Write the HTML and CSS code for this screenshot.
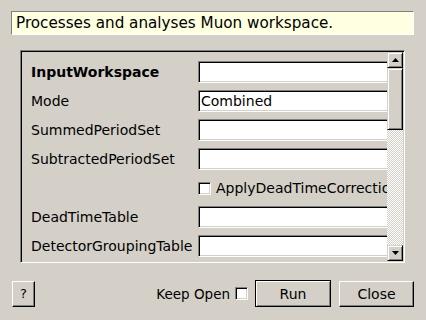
FILE: index.html
```html
<!DOCTYPE html>
<html>
<head>
<meta charset="utf-8">
<link rel="stylesheet" href="styles.css">
</head>
<body>
<div class="desc">Processes and analyses Muon workspace.</div>
<div class="frame">
  <div class="viewport">
    <div class="rows">
      <div class="label bold">InputWorkspace</div><div class="field"><div class="input"></div></div>
      <div class="label">Mode</div><div class="field"><div class="input">Combined</div></div>
      <div class="label">SummedPeriodSet</div><div class="field"><div class="input"></div></div>
      <div class="label">SubtractedPeriodSet</div><div class="field"><div class="input"></div></div>
      <div class="label"></div><div class="field check"><span class="cb"></span><span class="cbtext">ApplyDeadTimeCorrection</span></div>
      <div class="label">DeadTimeTable</div><div class="field"><div class="input"></div></div>
      <div class="label">DetectorGroupingTable</div><div class="field"><div class="input"></div></div>
    </div>
  </div>
  <div class="scrollbar">
    <div class="sbtn"><svg width="7" height="4" viewBox="0 0 7 4"><path d="M3.5 0 L7 4 L0 4 Z" fill="#000"/></svg></div>
    <div class="thumb"></div>
    <div class="trough"></div>
    <div class="sbtn"><svg width="7" height="4" viewBox="0 0 7 4"><path d="M0 0 L7 0 L3.5 4 Z" fill="#000"/></svg></div>
  </div>
</div>
<div class="bottom">
  <div class="btn help">?</div>
  <div class="spacer"></div>
  <span class="keep">Keep Open</span><span class="cb keepcb"></span>
  <div class="btn run">Run</div>
  <div class="btn close">Close</div>
</div>
</body>
</html>
```
FILE: styles.css
```css
html, body {
  margin: 0;
  padding: 0;
  background: #d4d0c8;
  font-family: "DejaVu Sans", sans-serif;
  font-size: 14px;
  color: #000;
  width: 426px;
  height: 320px;
  overflow: hidden;
}
.desc {
  margin: 11px 12px 0 11px;
  height: 22px;
  line-height: 22px;
  padding-left: 4px;
  font-size: 15.2px;
  background: #ffffe1;
  border-top: 1px solid #808080;
  border-left: 1px solid #808080;
  border-right: 1px solid #fff;
  border-bottom: 1px solid #fff;
  white-space: nowrap;
}
.frame {
  margin: 15px 21px 0 20px;
  height: 209px;
  display: flex;
  border-top: 1px solid #808080;
  border-left: 1px solid #808080;
  border-right: 1px solid #fff;
  border-bottom: 1px solid #fff;
  box-shadow: inset 1px 1px 0 #000, inset -1px -1px 0 #d4d0c8;
  padding: 1px;
}
.viewport {
  flex: 1;
  overflow: hidden;
  min-width: 0;
}
.rows {
  display: grid;
  grid-template-columns: 167px 220px;
  grid-auto-rows: 29px;
  padding: 9px 0 0 9px;
}
.label {
  height: 22px;
  line-height: 23px;
  white-space: nowrap;
}
.bold { font-weight: bold; }
.field {
  height: 22px;
  display: flex;
  align-items: center;
}
.input {
  box-sizing: border-box;
  width: 220px;
  height: 22px;
  line-height: 20px;
  padding-left: 2px;
  background: #fff;
  border-top: 1px solid #808080;
  border-left: 1px solid #808080;
  border-right: 1px solid #fff;
  border-bottom: 1px solid #fff;
  box-shadow: inset 1px 1px 0 #000, inset -1px -1px 0 #d4d0c8;
  white-space: nowrap;
}
.cb {
  box-sizing: border-box;
  display: inline-block;
  width: 13px;
  height: 13px;
  background: #fff;
  border-top: 1px solid #808080;
  border-left: 1px solid #808080;
  border-right: 1px solid #fff;
  border-bottom: 1px solid #fff;
  box-shadow: inset 1px 1px 0 #000, inset -1px -1px 0 #d4d0c8;
  flex: none;
}
.cbtext {
  margin-left: 5px;
  white-space: nowrap;
}
.scrollbar {
  width: 16px;
  display: flex;
  flex-direction: column;
}
.sbtn, .thumb {
  box-sizing: border-box;
  background: #d4d0c8;
  border-top: 1px solid #d4d0c8;
  border-left: 1px solid #d4d0c8;
  border-right: 1px solid #000;
  border-bottom: 1px solid #000;
  box-shadow: inset 1px 1px 0 #fff, inset -1px -1px 0 #808080;
}
.sbtn {
  height: 16px;
  display: flex;
  align-items: center;
  justify-content: center;
}
.thumb { height: 62px; }
.trough {
  flex: 1;
  background: repeating-conic-gradient(#fff 0 25%, #d4d0c8 0 50%) 0 0 / 2px 2px;
}
.bottom {
  display: flex;
  align-items: center;
  margin: 17px 12px 0 12px;
  height: 27px;
}
.spacer { flex: 1; }
.btn {
  box-sizing: border-box;
  height: 26px;
  display: flex;
  align-items: center;
  justify-content: center;
  background: #d4d0c8;
  border-top: 1px solid #fff;
  border-left: 1px solid #fff;
  border-right: 1px solid #000;
  border-bottom: 1px solid #000;
  box-shadow: inset -1px -1px 0 #808080;
}
.help { width: 23px; font-size: 13px; }
.keep { margin-right: 5px; font-size: 13.5px; }
.keepcb { margin-right: 7px; }
.run {
  width: 76px;
  height: 27px;
  border: 1px solid #000;
  box-shadow: inset 1px 1px 0 #fff, inset -1px -1px 0 #808080;
}
.close { width: 75px; margin-left: 8px; }
```
